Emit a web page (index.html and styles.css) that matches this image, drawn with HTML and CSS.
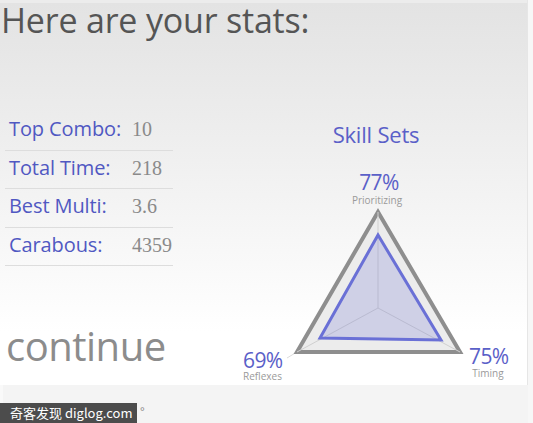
FILE: index.html
```html
<!DOCTYPE html>
<html lang="en">
<head>
  <meta charset="UTF-8">
  <title>Here are your stats</title>
  <link rel="stylesheet" href="styles.css">
</head>
<body>

  <div class="screen">
    <h1>Here are your stats:</h1>

    <div class="main">
      <div class="left">
        <div class="stats">
          <div class="row"><span class="label">Top Combo:</span><span class="value">10</span></div>
          <div class="row"><span class="label">Total Time:</span><span class="value">218</span></div>
          <div class="row"><span class="label">Best Multi:</span><span class="value">3.6</span></div>
          <div class="row"><span class="label">Carabous:</span><span class="value">4359</span></div>
        </div>
        <div class="continue">continue</div>
      </div>

      <div class="skills">
        <h2>Skill Sets</h2>
        <svg class="chart" width="298" height="225" viewBox="0 0 298 225">
          <line class="tick" x1="68" y1="192" x2="58" y2="198"/>
          <polygon class="outer" points="149,52 68,192 231,192"/>
          <line class="spoke" x1="149" y1="148" x2="149" y2="52"/>
          <line class="spoke" x1="149" y1="148" x2="68" y2="192"/>
          <line class="spoke" x1="149" y1="148" x2="231" y2="192"/>
          <polygon class="inner" points="149,75 91,178 212,180"/>

          <text class="pct" x="150" y="30" text-anchor="middle">77%</text>
          <text class="name" x="148" y="44" text-anchor="middle">Prioritizing</text>
          <text class="pct" x="14" y="208">69%</text>
          <text class="name" x="14" y="220">Reflexes</text>
          <text class="pct" x="240" y="204">75%</text>
          <text class="name" x="259" y="217" text-anchor="middle">Timing</text>
        </svg>
      </div>
    </div>
  </div>

  <div class="footer"></div>

  <div class="watermark">奇客发现 diglog.com</div>
  <span class="dot">°</span>

</body>
</html>
```

FILE: styles.css
```css
* {
  box-sizing: border-box;
}

body {
  margin: 0;
  width: 533px;
  height: 423px;
  overflow: hidden;
  background-color: #f7f7f7;
  font-family: 'Open Sans', sans-serif;
}

.screen {
  width: 528px;
  height: 385px;
  border-right: 1px solid #e6e6e6;
  background: linear-gradient(#ececec 0, #ececec 3px, #e3e3e3 3px, #ececec 30%, #ffffff 86%);
  display: flex;
  flex-direction: column;
}

h1 {
  margin: 0;
  padding-left: 1px;
  height: 45px;
  font-size: 34px;
  font-weight: normal;
  line-height: 40px;
  color: #555555;
  letter-spacing: -0.2px;
}

.main {
  flex: 1;
  display: flex;
}

.left {
  width: 230px;
  display: flex;
  flex-direction: column;
}

.stats {
  margin-left: 5px;
  width: 168px;
  padding-top: 67px;
}

.row {
  display: flex;
  align-items: baseline;
  height: 38.5px;
  line-height: 33px;
  border-bottom: 1px solid #dddddd;
}

.label {
  width: 127px;
  padding-left: 4px;
  font-size: 20px;
  color: #5058c2;
  letter-spacing: -0.1px;
}

.value {
  font-family: 'Liberation Serif', serif;
  font-size: 20px;
  color: #8a8a8a;
}

.continue {
  margin-top: auto;
  padding-left: 6px;
  padding-bottom: 19px;
  font-size: 40px;
  line-height: 40px;
  color: #8c8c8c;
  letter-spacing: -0.5px;
}

.skills {
  width: 298px;
  text-align: center;
}

h2 {
  margin: 77px 0 0 0;
  padding-right: 4px;
  font-size: 22px;
  font-weight: normal;
  line-height: 24px;
  color: #5a60c8;
  letter-spacing: -0.2px;
}

.chart {
  display: block;
  margin-top: 14px;
}

.outer {
  fill: #ececec;
  stroke: #8e8e8e;
  stroke-width: 4;
  stroke-linejoin: miter;
}

.spoke {
  stroke: #d0d0d0;
  stroke-width: 1;
}

.tick {
  stroke: #dcdcdc;
  stroke-width: 1;
}

.inner {
  fill: rgba(120, 125, 210, 0.25);
  stroke: #6a70d6;
  stroke-width: 3;
}

.pct {
  font-family: 'Open Sans', sans-serif;
  font-size: 21px;
  fill: #5a60c8;
  letter-spacing: -0.6px;
}

.name {
  font-family: 'Open Sans', sans-serif;
  font-size: 10px;
  fill: #9a9a9a;
}

.footer {
  width: 528px;
  height: 38px;
  background-color: #f4f4f4;
  border-left: 3px solid #f9f9f9;
}

.watermark {
  position: absolute;
  left: 0;
  top: 403px;
  width: 137px;
  height: 20px;
  padding-left: 10px;
  background-color: #4c4c4c;
  color: #ffffff;
  font-family: 'Noto Sans CJK SC', sans-serif;
  font-size: 13px;
  line-height: 20px;
  white-space: nowrap;
}

.dot {
  position: absolute;
  left: 140px;
  top: 403px;
  font-size: 11px;
  color: #888888;
}
```
